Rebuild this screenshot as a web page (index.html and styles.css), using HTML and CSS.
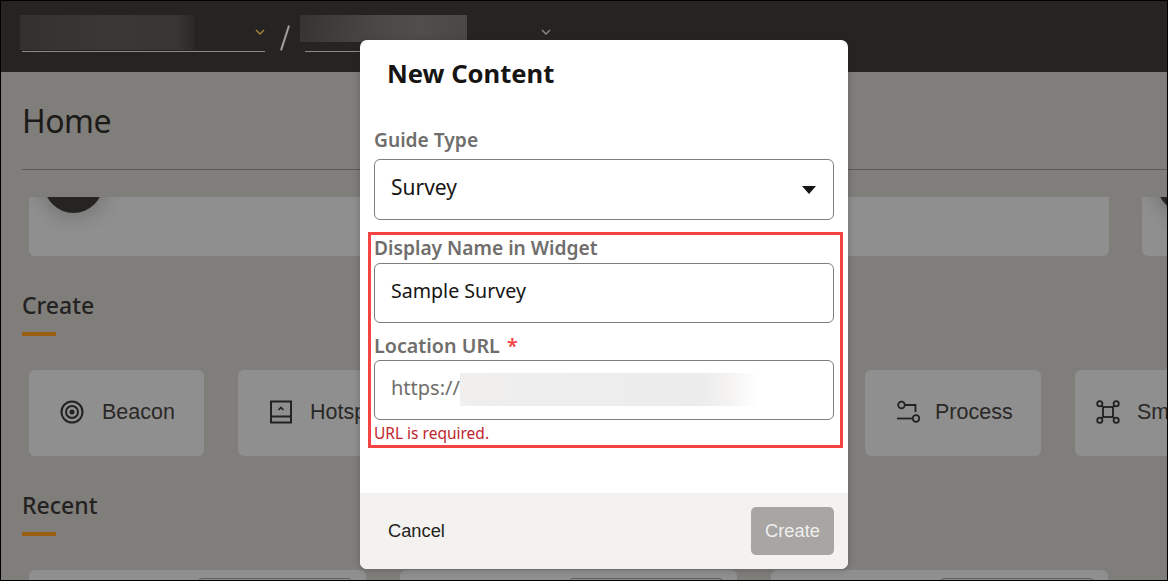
FILE: index.html
```html
<!DOCTYPE html>
<html lang="en">
<head>
<meta charset="utf-8">
<title>New Content</title>
<link rel="stylesheet" href="styles.css">
</head>
<body>
<div class="frame">
  <header class="topbar">
    <div class="crumb crumb-one">
      <span class="blur blur-one"></span>
      <svg class="chev" viewBox="0 0 10 6" width="10" height="6"><path d="M1 1l4 4 4-4" fill="none" stroke="#a8843f" stroke-width="1.4"/></svg>
    </div>
    <span class="slash"></span>
    <div class="crumb crumb-two">
      <span class="blur blur-two"></span>
      <svg class="chev" viewBox="0 0 10 6" width="10" height="6"><path d="M1 1l4 4 4-4" fill="none" stroke="#8c8a86" stroke-width="1.4"/></svg>
    </div>
  </header>

  <main class="page">
    <div class="title-row"><h1 class="page-title">Home</h1></div>
    <div class="hero-row">
      <div class="hero-card hero-wide"><span class="hero-dot"></span></div>
      <div class="hero-card hero-next"><span class="hero-dot"></span></div>
    </div>

    <h2 class="section-title section-create">Create</h2>
    <div class="tile-row">
      <div class="tile">
        <svg class="tile-icon" viewBox="0 0 24 24" width="24" height="24"><g fill="none" stroke="#242220" stroke-width="2"><circle cx="12" cy="12" r="10.5"/><circle cx="12" cy="12" r="6"/></g><circle cx="12" cy="12" r="2.5" fill="#242220"/></svg>
        <span>Beacon</span>
      </div>
      <div class="tile tile-hotspot">
        <svg class="tile-icon" viewBox="0 0 24 24" width="24" height="24"><g fill="none" stroke="#242220" stroke-width="2"><rect x="2" y="1.5" width="20" height="21"/><path d="M2 16.5h20"/><path d="M9.5 10l2.5-2.5 2.5 2.5" stroke-width="1.6"/></g></svg>
        <span>Hotspot</span>
      </div>
      <div class="tile"></div>
      <div class="tile"></div>
      <div class="tile tile-process">
        <svg class="tile-icon" viewBox="0 0 24 24" width="24" height="24"><g fill="none" stroke="#242220" stroke-width="1.8"><circle cx="5.5" cy="5" r="3.3"/><path d="M9 5h10.5v7"/><circle cx="20" cy="18.5" r="3.3"/><path d="M1 18.5h15.5"/></g></svg>
        <span>Process</span>
      </div>
      <div class="tile tile-smart">
        <svg class="tile-icon" viewBox="0 0 24 24" width="24" height="24"><g fill="none" stroke="#242220" stroke-width="1.8"><rect x="7" y="7" width="10" height="10"/><circle cx="3.8" cy="3.8" r="2.6"/><circle cx="20.2" cy="3.8" r="2.6"/><circle cx="3.8" cy="20.2" r="2.6"/><circle cx="20.2" cy="20.2" r="2.6"/><path d="M5.8 5.8L7 7M18.2 5.8L17 7M5.8 18.2L7 17M18.2 18.2L17 17"/></g></svg>
        <span>Smart Tip</span>
      </div>
    </div>

    <h2 class="section-title section-recent">Recent</h2>
    <div class="recent-row">
      <div class="recent-card"><span class="recent-pill"></span></div>
      <div class="recent-card"><span class="recent-pill"></span></div>
      <div class="recent-card"><span class="recent-pill"></span></div>
    </div>
  </main>

  <section class="dialog" aria-label="New Content">
    <h2 class="dialog-title">New Content</h2>
    <div class="dialog-body">
      <div class="field field-guide">
        <label class="field-label">Guide Type</label>
        <div class="input input-select">
          <span>Survey</span>
          <span class="caret"></span>
        </div>
      </div>
      <div class="highlight">
        <div class="field field-tight">
          <label class="field-label">Display Name in Widget</label>
          <div class="input input-name"><span>Sample Survey</span></div>
        </div>
        <div class="field field-url">
          <label class="field-label">Location URL <span class="req">*</span></label>
          <div class="input input-url"><span class="placeholder">https://</span><span class="blur blur-url"></span></div>
          <p class="error">URL is required.</p>
        </div>
      </div>
    </div>
    <footer class="dialog-foot">
      <button class="btn btn-cancel" type="button">Cancel</button>
      <button class="btn btn-create" type="button" disabled>Create</button>
    </footer>
  </section>
</div>
</body>
</html>
```

FILE: styles.css
```css
* { box-sizing: border-box; }
html, body { margin: 0; padding: 0; }
body { width: 1168px; height: 581px; overflow: hidden; background: #000; font-family: "Noto Sans", "Open Sans", sans-serif; }

.frame {
  position: relative;
  width: 1168px;
  height: 581px;
  border: 1px solid #000;
  overflow: hidden;
  background: #7f7e7b;
  display: flex;
  flex-direction: column;
}

/* top bar */
.topbar {
  flex: none;
  height: 71px;
  background: #262422;
  display: flex;
  padding: 0 0 0 21px;
  align-items: flex-start;
}
.crumb {
  height: 51px;
  border-bottom: 1px solid #8b8986;
  display: flex;
  align-items: flex-start;
}
.crumb-one { width: 243px; }
.crumb-two { width: 250px; margin-left: 19px; }
.blur { display: block; }
.blur-one {
  width: 179px; height: 35px; margin: 14px 0 0 -2px;
  background: linear-gradient(90deg, #33312f, #3a3836 50%, #383634 90%, #2b2927);
}
.blur-two {
  width: 167px; height: 27px; margin: 14px 0 0 -5px;
  background: linear-gradient(100deg, #363432, #4a4846 45%, #504e4c 70%, #4a4846);
}
.chev { flex: none; }
.crumb-one .chev { margin: 28px 0 0 61px; }
.crumb-two .chev { margin: 28px 0 0 74px; }
.slash {
  flex: none;
  width: 2px;
  height: 26px;
  margin: 24px 0 0 19px;
  background: #a09e9a;
  transform: rotate(18deg);
}

/* page */
.page { flex: 1; min-height: 0; overflow: hidden; }
.title-row {
  margin: 0 0 0 21px;
  height: 98px;
  border-bottom: 1px solid #5c5a58;
  padding-top: 27px;
}
.page-title { margin: 0; font-size: 32px; line-height: 44px; font-weight: 400; letter-spacing: -0.5px; color: #1c1a18; }

.hero-row { display: flex; gap: 33px; margin: 27px 0 0 28px; width: 1300px; }
.hero-card {
  height: 59px;
  background: #8f8f8f;
  border-radius: 0 0 6px 6px;
  overflow: hidden;
}
.hero-wide { width: 1080px; }
.hero-next { width: 120px; }
.hero-dot {
  display: block;
  width: 59px; height: 59px;
  margin: -43px 0 0 15px;
  border-radius: 50%;
  background: #262422;
  box-shadow: 0 0 16px 6px rgba(60,58,56,.25);
}

.section-title {
  margin: 0 0 0 21px;
  font-size: 23px;
  line-height: 32px;
  font-weight: 500;
  color: #242220;
  height: 44px;
}
.section-title::after {
  content: "";
  display: block;
  width: 34px;
  height: 4px;
  margin-top: 11px;
  background: #9a5f12;
}
.section-create { margin-top: 33px; }
.section-recent { margin-top: 33px; }

.tile-row { display: flex; gap: 34px; margin: 37px 0 0 28px; width: 1300px; }
.tile {
  flex: none;
  width: 175px;
  height: 86px;
  border-radius: 6px;
  background: #8f8f8f;
  display: flex;
  align-items: center;
  padding-left: 31px;
  font-family: "Liberation Sans", Arial, sans-serif;
  font-size: 21.5px;
  color: #2a2826;
  white-space: nowrap;
  gap: 18px;
  padding-bottom: 2px;
}
.tile-hotspot { gap: 17px; }
.tile-process { width: 176px; gap: 15px; }
.tile-smart { padding-left: 21px; gap: 17px; }
.tile-icon { flex: none; }

.recent-row { display: flex; gap: 34px; margin: 37px 0 0 28px; width: 1300px; }
.recent-card {
  flex: none;
  width: 337px;
  height: 60px;
  background: #8f8f8f;
  border-radius: 6px 6px 0 0;
  padding: 8px 0 0 169px;
}
.recent-pill {
  display: block;
  width: 154px;
  height: 20px;
  border: 1px solid #625f5d;
  border-radius: 4px;
}

/* dialog */
.dialog {
  position: absolute;
  left: 359px;
  top: 39px;
  width: 488px;
  height: 529px;
  background: #fff;
  border-radius: 7px;
  box-shadow: 0 1px 6px rgba(40,38,36,.3);
  display: flex;
  flex-direction: column;
  overflow: hidden;
}
.dialog-title {
  flex: none;
  margin: 0;
  height: 68px;
  padding: 16px 0 0 27px;
  font-size: 25.6px;
  line-height: 36px;
  font-weight: 700;
  color: #161513;
}
.dialog-body { flex: 1; padding: 0 14px; }
.field-label {
  display: block;
  font-size: 19.2px;
  line-height: 26px;
  font-weight: 600;
  color: #6f6e6c;
}
.field-guide > .field-label { box-sizing: content-box; height: 26px; padding-top: 19px; margin-bottom: 6px; }
.input {
  height: 61px;
  border: 1px solid #7f7e7c;
  border-radius: 6px;
  display: flex;
  align-items: center;
  padding: 0 16px 5px;
  font-size: 20px;
  color: #161513;
  background: #fff;
}
.input-select { font-size: 21px; padding-right: 17px; }
.input-name { font-size: 19.6px; }
.caret {
  margin: 5px 0 0 auto;
  width: 0; height: 0;
  border-left: 7.5px solid transparent;
  border-right: 7.5px solid transparent;
  border-top: 8px solid #161513;
}
.highlight {
  margin: 12px -9px 0 -6px;
  height: 216px;
  border: 3px solid #f44444;
  padding: 0 6px 0 3px;
}
.field-tight > .input, .field-url > .input { height: 60px; }
.field-tight > .field-label { margin-bottom: 2px; height: 26px; }
.field-url > .field-label { padding-top: 10px; margin-bottom: 1px; height: 36px; font-size: 19.7px; }
.req { color: #f44444; margin-left: 2px; }
.placeholder { color: #6f6e6c; flex: none; }
.blur-url {
  width: 298px;
  height: 33px;
  margin-top: 4px;
  background: linear-gradient(90deg, #f0efee, #eeeded 50%, #edecec 80%, #f4f3f2 90%, #fff);
}
.error {
  margin: 3px 0 0;
  font-size: 15.5px;
  line-height: 20px;
  color: #c0272d;
}

.dialog-foot {
  flex: none;
  height: 76px;
  background: #f3f2f0;
  display: flex;
  justify-content: space-between;
  align-items: center;
  padding: 0 14px;
}
.btn {
  font-family: "Liberation Sans", Arial, sans-serif;
  font-size: 18.3px;
  border: 0;
  border-radius: 5px;
  height: 48px;
  background: none;
  padding: 0;
}
.btn-cancel { color: #242220; padding: 0 14px; }
.btn-create { width: 83px; background: #a8a5a3; color: #f0efee; }
```
